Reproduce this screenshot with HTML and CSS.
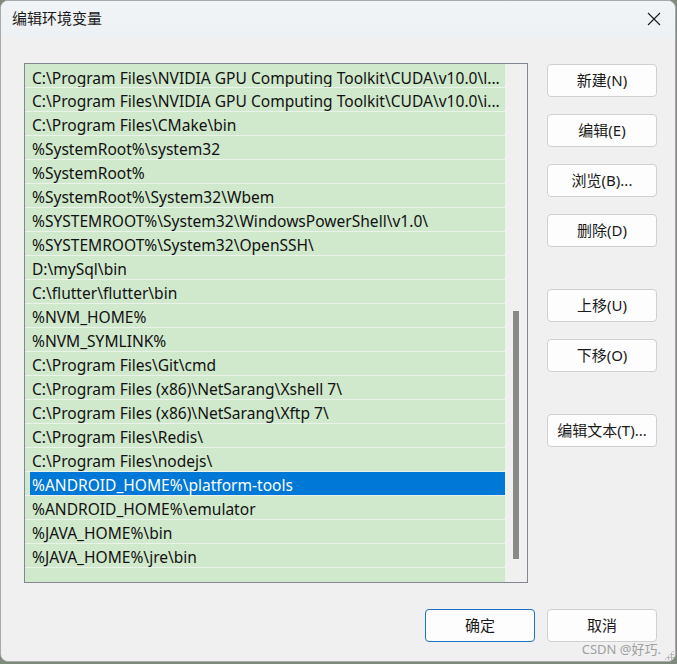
FILE: index.html
```html
<!DOCTYPE html>
<html lang="zh-CN">
<head>
<meta charset="utf-8">
<title>编辑环境变量</title>
<link rel="stylesheet" href="styles.css">
</head>
<body>
<div class="window">
  <div class="titlebar">
    <span class="title">编辑环境变量</span>
    <span class="close">
      <svg width="14" height="14" viewBox="0 0 14 14"><path d="M1 1 L13 13 M13 1 L1 13" stroke="#1a1a1a" stroke-width="1.1" fill="none"/></svg>
    </span>
  </div>
  <div class="content">
    <div class="listbox">
      <div class="rows">
        <div class="row">C:\Program Files\NVIDIA GPU Computing Toolkit\CUDA\v10.0\l...</div>
        <div class="row">C:\Program Files\NVIDIA GPU Computing Toolkit\CUDA\v10.0\i...</div>
        <div class="row">C:\Program Files\CMake\bin</div>
        <div class="row">%SystemRoot%\system32</div>
        <div class="row">%SystemRoot%</div>
        <div class="row">%SystemRoot%\System32\Wbem</div>
        <div class="row">%SYSTEMROOT%\System32\WindowsPowerShell\v1.0\</div>
        <div class="row">%SYSTEMROOT%\System32\OpenSSH\</div>
        <div class="row">D:\mySql\bin</div>
        <div class="row">C:\flutter\flutter\bin</div>
        <div class="row">%NVM_HOME%</div>
        <div class="row">%NVM_SYMLINK%</div>
        <div class="row">C:\Program Files\Git\cmd</div>
        <div class="row">C:\Program Files (x86)\NetSarang\Xshell 7\</div>
        <div class="row">C:\Program Files (x86)\NetSarang\Xftp 7\</div>
        <div class="row">C:\Program Files\Redis\</div>
        <div class="row">C:\Program Files\nodejs\</div>
        <div class="row selected">%ANDROID_HOME%\platform-tools</div>
        <div class="row">%ANDROID_HOME%\emulator</div>
        <div class="row">%JAVA_HOME%\bin</div>
        <div class="row">%JAVA_HOME%\jre\bin</div>
        <div class="row empty"></div>
      </div>
      <div class="scrollbar"><div class="thumb"></div></div>
    </div>
    <div class="side">
      <button class="btn">新建(N)</button>
      <button class="btn">编辑(E)</button>
      <button class="btn">浏览(B)...</button>
      <button class="btn">删除(D)</button>
      <button class="btn group">上移(U)</button>
      <button class="btn">下移(O)</button>
      <button class="btn group">编辑文本(T)...</button>
    </div>
  </div>
  <div class="footer">
    <button class="btn primary">确定</button>
    <button class="btn">取消</button>
  </div>
  <div class="watermark">CSDN @好巧.</div>
  <div class="grip"></div>
</div>
</body>
</html>
```

FILE: styles.css
```css
* { box-sizing: border-box; }
html, body { margin: 0; padding: 0; }
body {
  width: 677px;
  height: 664px;
  background: #7d8a7c;
  overflow: hidden;
  font-family: "Noto Sans", "Noto Sans CJK SC", sans-serif;
  color: #1a1a1a;
}
.window {
  position: relative;
  width: 676px;
  height: 662px;
  background: #f0f0f0;
  border: 1px solid #a9a9a9;
  border-radius: 8px;
  display: flex;
  flex-direction: column;
  overflow: hidden;
}
.titlebar {
  height: 37px;
  flex: none;
  display: flex;
  align-items: center;
  justify-content: space-between;
  padding-left: 11px;
  padding-right: 14px;
  background: linear-gradient(to bottom, #f1f4f7, #eef1f4);
}
.title {
  font-family: "Noto Sans CJK SC", sans-serif;
  font-size: 15px;
  line-height: 20px;
  margin-top: -3px;
  color: #1a1a1a;
}
.close { display: flex; margin-top: -1px; }
.content {
  display: flex;
  padding: 25px 0 0 23px;
}
.listbox {
  width: 504px;
  height: 520px;
  border: 1px solid #828790;
  display: flex;
  background: #f0f0f0;
}
.rows {
  width: 480px;
  padding-top: 1px;
  background: #d0e8cc;
  overflow: hidden;
}
.row {
  height: 24px;
  border-bottom: 1px solid #ebf2e9;
  padding: 0 0 0 7px;
  font-size: 15.55px;
  line-height: 27px;
  white-space: nowrap;
  overflow: hidden;
  color: #111;
}
.row:first-child { height: 23px; line-height: 26px; }
.row.selected {
  background: linear-gradient(to right, #d0e8cc 5px, #0078d7 5px);
  color: #fff;
}
.row.empty { border-bottom: none; }
.scrollbar {
  width: 22px;
  padding: 247px 0 0 8px;
}
.thumb {
  width: 6px;
  height: 248px;
  background: #898989;
}
.side {
  display: flex;
  flex-direction: column;
  gap: 17px;
  margin-left: 19px;
  padding-top: 1px;
}
.btn {
  width: 110px;
  height: 33px;
  background: #fdfdfd;
  border: 1px solid #d0d0d0;
  border-radius: 4px;
  font-family: "Noto Sans", "Noto Sans CJK SC", sans-serif;
  font-size: 15px;
  color: #1a1a1a;
  padding: 0;
  line-height: 31px;
}
.btn.group { margin-top: 25px; }
.footer {
  display: flex;
  justify-content: flex-end;
  gap: 12px;
  padding: 26px 18px 0 0;
}
.btn.primary { border-color: #1a73c4; }
.watermark {
  position: absolute;
  right: 14px;
  bottom: 3px;
  font-size: 13px;
  color: #a0a0a0;
  font-family: "Noto Sans", "Noto Sans CJK SC", sans-serif;
}
.grip {
  position: absolute;
  right: 1px;
  bottom: 1px;
  width: 10px;
  height: 10px;
  background:
    radial-gradient(circle, #b8b8b8 1px, transparent 1.3px) 0 0 / 3px 3px;
  clip-path: polygon(100% 0, 100% 100%, 0 100%);
}
```
